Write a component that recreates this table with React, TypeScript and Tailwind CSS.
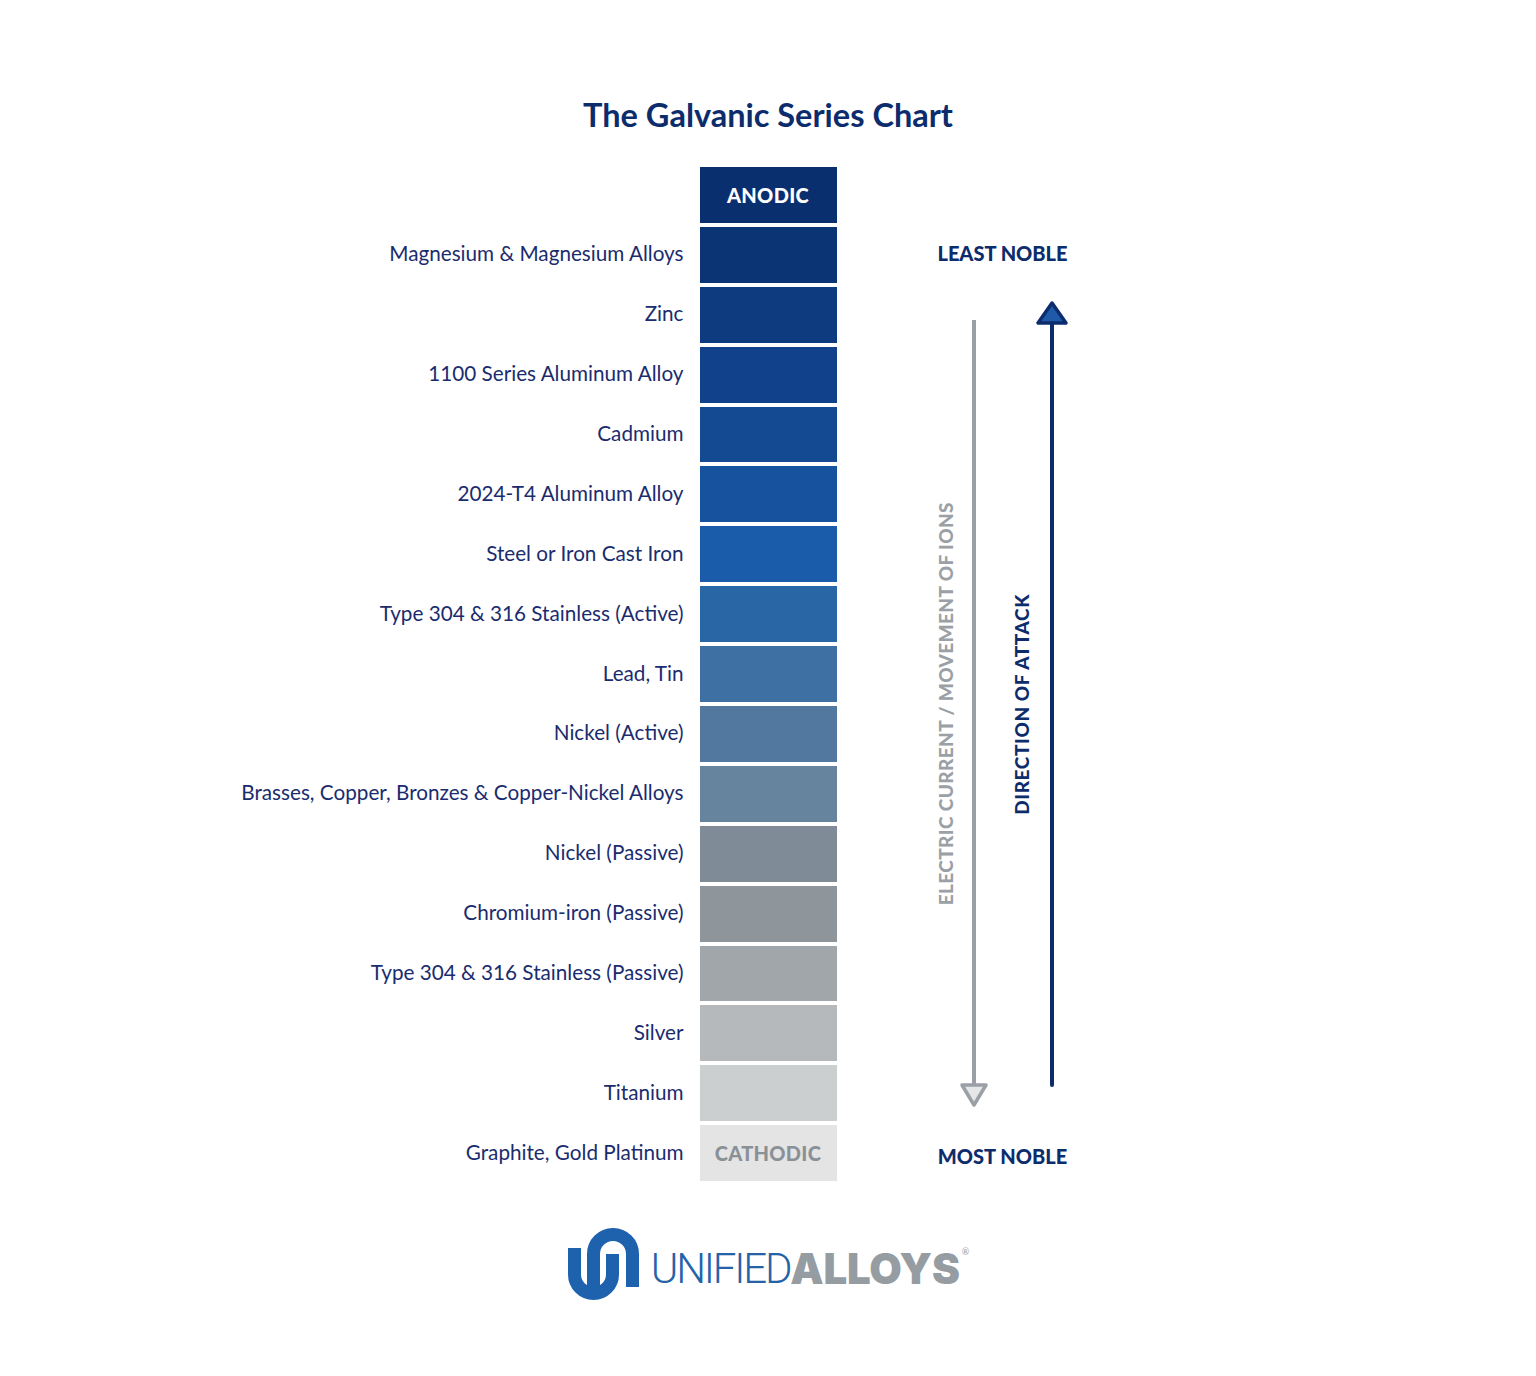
import React from "react"

const rows = [
  { label: "", color: "bg-[#0a2f6f]", text: "ANODIC" },
  { label: "Magnesium & Magnesium Alloys", color: "bg-[#0b3474]" },
  { label: "Zinc", color: "bg-[#0e3a7f]" },
  { label: "1100 Series Aluminum Alloy", color: "bg-[#11418a]" },
  { label: "Cadmium", color: "bg-[#134a92]" },
  { label: "2024-T4 Aluminum Alloy", color: "bg-[#16529d]" },
  { label: "Steel or Iron Cast Iron", color: "bg-[#1a5ca9]" },
  { label: "Type 304 & 316 Stainless (Active)", color: "bg-[#2966a5]" },
  { label: "Lead, Tin", color: "bg-[#3e70a4]" },
  { label: "Nickel (Active)", color: "bg-[#52789f]" },
  { label: "Brasses, Copper, Bronzes & Copper-Nickel Alloys", color: "bg-[#66849e]" },
  { label: "Nickel (Passive)", color: "bg-[#7f8c98]" },
  { label: "Chromium-iron (Passive)", color: "bg-[#8e959b]" },
  { label: "Type 304 & 316 Stainless (Passive)", color: "bg-[#a0a6a9]" },
  { label: "Silver", color: "bg-[#b5b9bc]" },
  { label: "Titanium", color: "bg-[#cbcfd0]" },
  { label: "Graphite, Gold Platinum", color: "bg-[#e4e4e5]", text: "CATHODIC", muted: true },
]

function GreyArrow() {
  return (
    <svg width="30" height="808" viewBox="0 0 30 808" className="block">
      <line x1="15" y1="20" x2="15" y2="785" stroke="#9aa0a5" strokeWidth="4" />
      <path d="M3 785 L27 785 L15 805 Z" fill="#e4e6e8" stroke="#9aa0a5" strokeWidth="3.5" strokeLinejoin="round" />
    </svg>
  )
}

function BlueArrow() {
  return (
    <svg width="34" height="808" viewBox="0 0 34 808" className="block">
      <line x1="17" y1="20" x2="17" y2="785" stroke="#0d2c6e" strokeWidth="4" strokeLinecap="round" />
      <path d="M17 3 L31 23 L3 23 Z" fill="#1f5aa8" stroke="#0d2c6e" strokeWidth="3.5" strokeLinejoin="round" />
    </svg>
  )
}

function LogoMark() {
  return (
    <svg width="74" height="76" viewBox="0 0 74 76" className="block">
      <path d="M7.5 21 V47.5 A19 19 0 0 0 45.5 47.5 V27" fill="none" stroke="#1e61ad" strokeWidth="13" />
      <path d="M26.5 60 V27 A19.5 19.5 0 0 1 65.5 27 V60" fill="none" stroke="#1e61ad" strokeWidth="13" />
    </svg>
  )
}

export default function App() {
  return (
    <div className="min-h-[1376px] w-full bg-white font-['Lato',sans-serif]">
      <div className="flex flex-col items-center pt-[95px]">
        <h1 className="text-[32.5px] leading-[40px] font-bold text-[#0d2c6c]">The Galvanic Series Chart</h1>

        <div className="mt-[32px] flex">
          {/* Labels */}
          <div className="flex w-[460px] flex-col gap-[4px] pr-[16px]">
            {rows.map((r, i) => (
              <div key={i} className="flex h-[55.9px] items-center justify-end pb-[2px] text-[20.7px] text-[#1a2c6e]">
                {r.label}
              </div>
            ))}
          </div>

          {/* Blocks */}
          <div className="flex w-[137px] flex-col gap-[4px]">
            {rows.map((r, i) => (
              <div
                key={i}
                className={`flex h-[55.9px] items-center justify-center text-[20px] font-black tracking-[0.3px] ${r.color} ${
                  r.muted ? "text-[#8a9196]" : "text-white"
                }`}
              >
                {r.text}
              </div>
            ))}
          </div>

          {/* Noble scale */}
          <div className="w-[460px]">
            <div className="flex w-[332px] flex-col items-center">
              <div className="mt-[73px] text-[20px] leading-[26px] font-black text-[#0d2c6c]">LEAST NOBLE</div>
              <div className="mt-[34px] flex h-[808px] w-full items-center">
                <div className="w-[98px]" />
                <div className="flex w-[24px] justify-center">
                  <span className="rotate-180 text-[19px] font-black tracking-[0.4px] text-[#9aa0a5] [writing-mode:vertical-rl]">
                    ELECTRIC CURRENT / MOVEMENT OF IONS
                  </span>
                </div>
                <GreyArrow />
                <div className="w-[22px]" />
                <div className="flex w-[24px] justify-center">
                  <span className="rotate-180 text-[19px] font-black tracking-[0.6px] text-[#0d2c6c] [writing-mode:vertical-rl]">
                    DIRECTION OF ATTACK
                  </span>
                </div>
                <BlueArrow />
              </div>
              <div className="mt-[35px] text-[20px] leading-[26px] font-black text-[#0d2c6c]">MOST NOBLE</div>
            </div>
          </div>
        </div>

        {/* Logo */}
        <div className="mt-[46px] flex items-center gap-[10px]">
          <LogoMark />
          <div className="flex items-start pt-[8px]">
            <span className="inline-block text-[42px] leading-[44px] font-light tracking-[-2.2px] text-[#2563a8] font-['Roboto',sans-serif]">
              UNIFIED
            </span>
            <span className="inline-block text-[42px] leading-[44px] font-black tracking-[-0.2px] text-[#959ca2] font-['Inter',sans-serif]">
              ALLOYS
            </span>
            <span className="ml-[2px] text-[9px] leading-[10px] text-[#959ca2]">®</span>
          </div>
        </div>
      </div>
    </div>
  )
}
